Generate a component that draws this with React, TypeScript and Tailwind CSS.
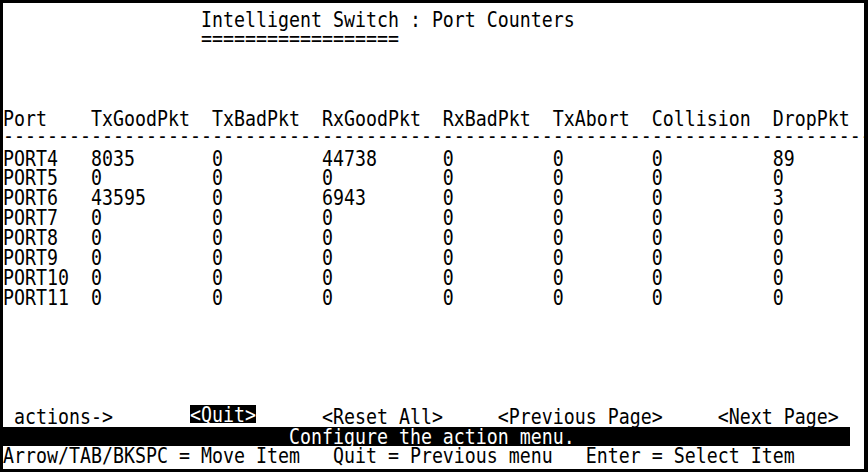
import React from 'react';

const COLS = [0, 8, 19, 29, 40, 50, 59, 70];

const headers = ['Port', 'TxGoodPkt', 'TxBadPkt', 'RxGoodPkt', 'RxBadPkt', 'TxAbort', 'Collision', 'DropPkt'];

const counters = [
  ['PORT4', '8035', '0', '44738', '0', '0', '0', '89'],
  ['PORT5', '0', '0', '0', '0', '0', '0', '0'],
  ['PORT6', '43595', '0', '6943', '0', '0', '0', '3'],
  ['PORT7', '0', '0', '0', '0', '0', '0', '0'],
  ['PORT8', '0', '0', '0', '0', '0', '0', '0'],
  ['PORT9', '0', '0', '0', '0', '0', '0', '0'],
  ['PORT10', '0', '0', '0', '0', '0', '0', '0'],
  ['PORT11', '0', '0', '0', '0', '0', '0', '0'],
];

// lay values out on fixed terminal columns
const toLine = (values: string[], cols: number[]) =>
  values.reduce((line, v, i) => line.padEnd(cols[i]) + v, '');

const T: React.FC<{ children: React.ReactNode }> = ({ children }) => (
  <span className="inline-block h-[19.86px] leading-[19.86px] whitespace-pre origin-center [transform:scaleY(1.17)]">
    {children}
  </span>
);

const Line: React.FC<{ children?: React.ReactNode }> = ({ children }) => (
  <div className="flex h-[19.86px] whitespace-pre">{children ? <T>{children}</T> : null}</div>
);

export default function App() {
  return (
    <div className="w-[868px] h-[472px] bg-black pt-[3px] pl-[3px] pr-[4px] pb-[3px]">
      <div className="h-full bg-white pt-[6.5px] overflow-hidden text-black leading-[19.86px] font-['DejaVu_Sans_Mono',monospace] text-[18.27px]">
        <Line>{' '.repeat(18) + 'Intelligent Switch : Port Counters'}</Line>
        <Line>{' '.repeat(18) + '='.repeat(18)}</Line>
        <Line />
        <Line />
        <Line />
        <Line>{toLine(headers, COLS)}</Line>
        <div className="flex items-start h-[19.86px]">
          <span className="-mt-[3px]">
            <T>{'-'.repeat(79)}</T>
          </span>
        </div>
        {counters.map((row) => (
          <Line key={row[0]}>{toLine(row, COLS)}</Line>
        ))}
        <Line />
        <Line />
        <Line />
        <Line />
        <Line />
        <div className="flex items-start h-[19.86px]">
          <T>{' actions->'.padEnd(17)}</T>
          <span className="flex -mt-[2px] h-[18px] bg-black text-white">
            <T>{'<Quit>'}</T>
          </span>
          <T>{''.padEnd(6) + '<Reset All>'.padEnd(16) + '<Previous Page>'.padEnd(20) + '<Next Page>'}</T>
        </div>
        <div className="flex h-[19.86px] w-[847px] bg-black text-white">
          <T>{' '.repeat(26) + 'Configure the action menu.'}</T>
        </div>
        <Line>
          {'Arrow/TAB/BKSPC = Move Item'.padEnd(30) + 'Quit = Previous menu'.padEnd(23) + 'Enter = Select Item'}
        </Line>
      </div>
    </div>
  );
}
